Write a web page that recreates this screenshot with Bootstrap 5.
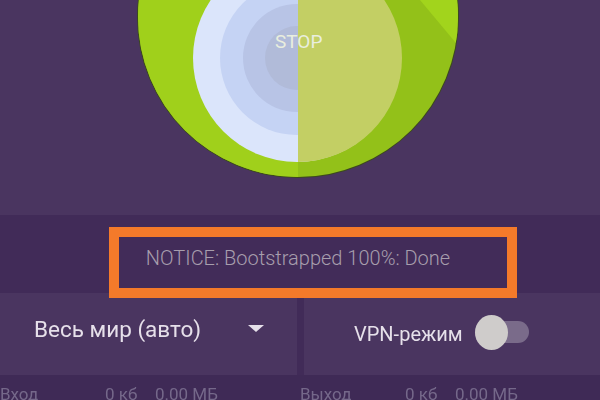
<!DOCTYPE html>
<html lang="ru"><head><meta charset="utf-8">
<link href="https://cdn.jsdelivr.net/npm/bootstrap@5.3.0/dist/css/bootstrap.min.css" rel="stylesheet">
<style>
html,body{margin:0;height:400px;width:600px;overflow:hidden;background:#3f2a56;font-family:Roboto,"Liberation Sans",sans-serif}
.shot{height:400px;overflow:hidden;filter:blur(.5px)}
.stage{height:215px;background:#4a3560;overflow:hidden}
.stage svg{display:block}
.noticebar{height:78px;background:#412b58;padding:12px 0 0 109px}
.noticebox{width:408px;height:71px;flex:none;z-index:1;border:10px solid #f47a2a;background:#422c59;color:#a79ead;font-size:20px;font-weight:300;padding:0 30px 10px 0}
.ctrlrow{height:82px;gap:7px;background:#412b58}
.ctrl{background:#4a3560;color:#e6e0ea}
.ctrl-l{width:297px;padding:0 33px 8px 34px;font-size:22.5px}
.ctrl-r{flex:1;padding:0 0 0 50px;font-size:20px;gap:12px}
.tri{width:0;height:0;margin-top:-4px;border-left:8px solid transparent;border-right:8px solid transparent;border-top:7px solid #e6e0ea}
.tgl{width:54px;height:22px;background:#7a6b8a;border-radius:11px;margin-top:-4px}
.tgl::before{content:"";display:block;width:33px;height:35px;border-radius:50%;background:#cfcccb;margin-top:-6px}
.stats{color:#75688a;font-size:17px;line-height:20px;padding-top:9px}
.stat-a{width:105px}
.stat-b{width:50px}
</style></head><body>
<div class="shot">
<div class="stage">
<svg width="600" height="215" viewBox="0 0 600 215">
<defs><clipPath id="disc"><circle cx="298" cy="17" r="160"/></clipPath></defs>
<circle cx="298" cy="17" r="161" fill="#3c4a1c"/>
<circle cx="298" cy="17" r="160" fill="#93c119"/>
<g clip-path="url(#disc)">
<path d="M298 177H130V0H298z" fill="#a0d01b"/>
<path d="M420 0H470V60z" fill="#a2d41c"/>
</g>
<circle cx="297" cy="58" r="104" fill="#dbe5fb"/>
<circle cx="297" cy="58" r="77" fill="#c5d3f4"/>
<circle cx="297" cy="58" r="54" fill="#b8c4e6"/>
<circle cx="297" cy="58" r="32" fill="#b1bbd9"/>
<path d="M298-46a104 104 0 0 1 0 208z" fill="#c3cf64"/>
<text x="275" y="48" fill="#e9eede" font-size="19" font-family="Roboto,sans-serif">STOP</text>
</svg>
</div>
<div class="d-flex noticebar">
<div class="noticebox position-relative d-flex align-items-center justify-content-center">NOTICE: Bootstrapped 100%: Done</div>
</div>
<div class="d-flex ctrlrow">
<div class="ctrl ctrl-l d-flex align-items-center justify-content-between"><span>Весь мир (авто)</span><i class="tri"></i></div>
<div class="ctrl ctrl-r d-flex align-items-center"><span>VPN-режим</span><i class="tgl"></i></div>
</div>
<div class="row g-0 stats">
<div class="col-6 d-flex"><span class="stat-a">Вход</span><span class="stat-b">0 кб</span><span>0.00 МБ</span></div>
<div class="col-6 d-flex"><span class="stat-a">Выход</span><span class="stat-b">0 кб</span><span>0.00 МБ</span></div>
</div>
</div>
</body></html>
